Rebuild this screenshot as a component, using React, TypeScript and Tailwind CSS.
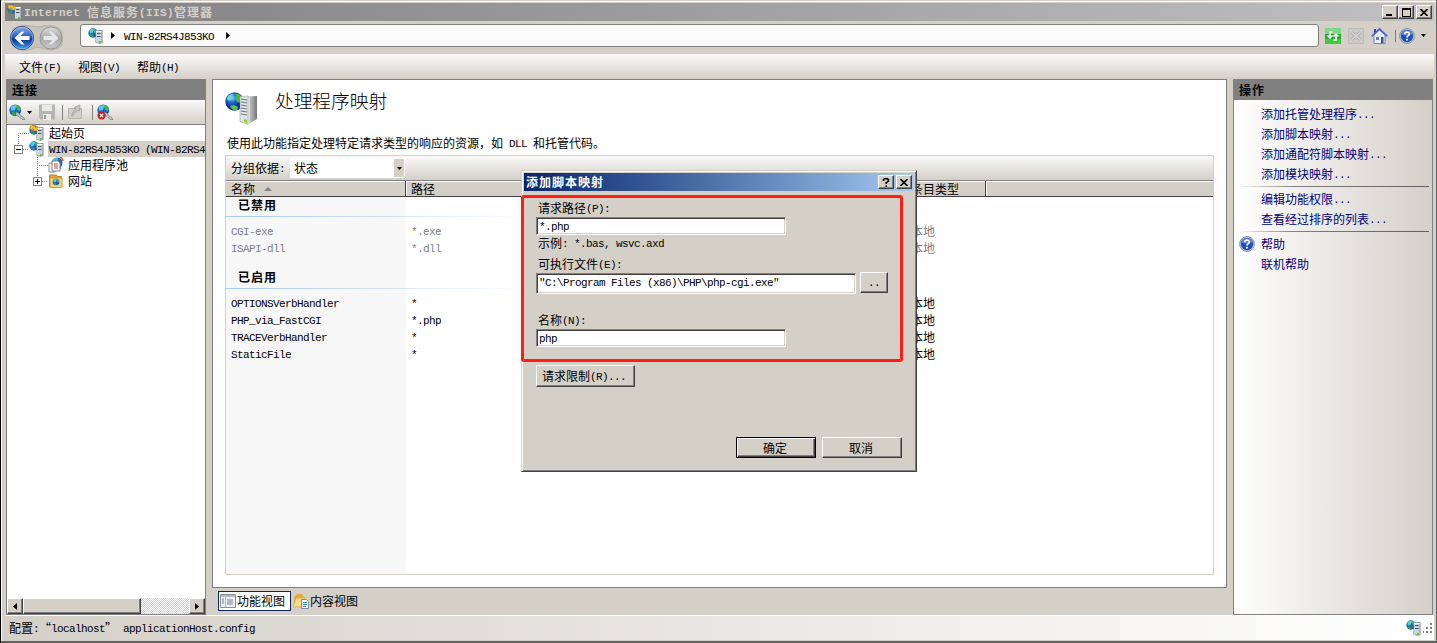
import type { ReactNode } from "react";
import clsx from "clsx";

const raised =
  "bg-[#d4d0c8] border border-t-white border-l-white border-r-[#404040] border-b-[#404040] shadow-[inset_-1px_-1px_0_#808080]";
const sunken =
  "bg-white border border-t-[#808080] border-l-[#808080] border-r-white border-b-white shadow-[inset_1px_1px_0_#404040,inset_-1px_-1px_0_#d4d0c8]";

// Latin runs sit on a half-width grid, Chinese runs on a full-width one
function T({ children, bold }: { children: string; bold?: boolean }) {
  return (
    <span className={clsx("whitespace-pre", bold && "font-bold tracking-[1px]")}>
      {children.split(/([\x20-\x7e]+)/).map((part, i) =>
        i % 2 ? (
          <span
            key={i}
            className={clsx(
              "align-[1px] font-['Liberation_Mono',monospace] text-[11px] leading-none",
              bold ? "tracking-[0.4px]" : "tracking-[-0.6px]"
            )}
          >
            {part}
          </span>
        ) : (
          part
        )
      )}
    </span>
  );
}

function GlobeShape() {
  return (
    <>
      <circle cx="5" cy="5" r="4.7" fill="#1c62c8" />
      <path d="M1.2 2.6C3 .2 6.5.4 7 1.6L5.2 3.2 4.6 5 2 5.4Z" fill="#59c8ec" />
      <path d="M5.4 1.2 8 1.6 9.5 4 8.4 5.5 6.6 4.8 6 3Z" fill="#43b94a" />
      <path d="M2 6l2.6.3L5.6 8 4.6 9.6 2.3 8.4Z" fill="#2fa043" />
      <path d="M7.4 6.6 9 6 8 8.4 6.8 8.6Z" fill="#0b2f8a" />
    </>
  );
}

function ServerIcon({ start = false }: { start?: boolean }) {
  return (
    <svg width="16" height="16" viewBox="0 0 16 16" className="shrink-0">
      <GlobeShape />
      <path d="M7.500 2.500 14 2l.5.8V15l-3 .8-4-1Z" fill="#7f8b93" />
      <path d="M8 3h5.500v11.800L8 14.400Z" fill="#ccd5da" />
      <path d="M8 3h5.500v1H8z" fill="#f2f5f6" />
      <path d="M9 5.500h3.500M9 8.500h3.500" stroke="#46535c" />
      <path d="M11 13h2v2h-2z" fill="#5bcf1d" />
      {start && (
        <path d="M1 1h5v1.500L8 1v5H3.500L5 4.500 3.500 3.500 2.500 5 1 4Z" fill="#f5bd27" stroke="#b87505" strokeWidth=".5" />
      )}
    </svg>
  );
}

function LargeServerIcon() {
  return (
    <svg width="33" height="33" viewBox="0 0 33 33" className="shrink-0">
      <defs>
        <linearGradient id="tower" x1="0" x2="1">
          <stop offset="0" stopColor="#d0d3d5" />
          <stop offset="1" stopColor="#73787c" />
        </linearGradient>
        <radialGradient id="ball" cx=".35" cy=".3">
          <stop offset="0" stopColor="#8ce0ff" />
          <stop offset=".5" stopColor="#2469dc" />
          <stop offset="1" stopColor="#0c2c92" />
        </radialGradient>
      </defs>
      <circle cx="9.5" cy="9.5" r="9.3" fill="url(#ball)" />
      <path d="M11 2c3-1 6 2 7 6l-2 3-4-1-2-4Z" fill="#49b93e" />
      <path d="M5 14l4-1 4 2-1 3c-3 1-6-1-7-4Z" fill="#58c54b" />
      <path d="M2 6c2-3 4-4 6-4L6 7 3 9Z" fill="#6dd8c9" />
      <path d="M23 4.500 32 4V27l-9 5.500Z" fill="url(#tower)" />
      <path d="M15 4.500 23 4V32.500L15 29.500Z" fill="#e2e5e7" stroke="#868b8e" strokeWidth=".5" />
      <path d="M16 7l6 1M16 10l6 1M16 13l6 1M16 16l6 1M16 19l6 1M16 22l6 1" stroke="#6c7479" />
      <path d="M19 27l3 1v3l-3-1Z" fill="#8ddb1c" />
      <path d="M24 5v27" stroke="#f7f7f7" strokeWidth=".8" />
    </svg>
  );
}

function ConnectIcon({ error = false }: { error?: boolean }) {
  return (
    <svg width="17" height="16" viewBox="0 0 17 16" className="shrink-0">
      <g transform="scale(1.25)">
        <GlobeShape />
      </g>
      <path d="M7 8l3 1 1 2 4 3 1 2-3-.6-3-3-3-1Z" fill="#bcc6cb" stroke="#6c7b84" strokeWidth=".7" />
      {error && (
        <>
          <circle cx="4.5" cy="11.5" r="4" fill="#d11c1c" />
          <path d="M3 10l3 3M6 10l-3 3" stroke="#fff" strokeWidth="1.3" />
        </>
      )}
    </svg>
  );
}

function HelpIcon() {
  return (
    <svg width="16" height="16" viewBox="0 0 16 16" className="shrink-0">
      <circle cx="8" cy="8" r="7.400" fill="#c9ced8" stroke="#858d9c" />
      <circle cx="8" cy="8" r="6.2" fill="#2250b6" />
      <path d="M2.2 6.5a6 6 0 0 1 11.6 0Q8 8.600 2.200 6.500Z" fill="#547fd6" />
      <path
        d="M5.700 6.300Q5.900 4.200 8 4.200T10.300 6.200C10.300 7.700 8 7.700 8 9.500M8 10.700v1.700"
        fill="none"
        stroke="#fff"
        strokeWidth="1.700"
      />
    </svg>
  );
}

function NavButtons() {
  return (
    <svg width="56" height="28" viewBox="0 0 56 28" className="mt-[4px] shrink-0">
      <defs>
        <linearGradient id="navBack" x1="0" x2="0" y1="0" y2="1">
          <stop offset="0" stopColor="#8fb4e8" />
          <stop offset=".45" stopColor="#245ec4" />
          <stop offset=".55" stopColor="#0b3596" />
          <stop offset="1" stopColor="#3fa3f2" />
        </linearGradient>
        <linearGradient id="navForward" x1="0" x2="0" y1="0" y2="1">
          <stop offset="0" stopColor="#dcdcdc" />
          <stop offset=".5" stopColor="#a9a9a9" />
          <stop offset="1" stopColor="#c9c9c9" />
        </linearGradient>
      </defs>
      <path d="M4 5Q12 0 22 2 28 4 34 2 46 0 53 7v14Q46 29 33 24 28 22 23 25 11 29 3 21Z" fill="#c6c3bc" stroke="#b4b0a8" />
      <circle cx="13" cy="14" r="11.600" fill="url(#navBack)" stroke="#3d4f78" />
      <circle cx="13" cy="14" r="10.800" fill="none" stroke="#a9c6ee" strokeWidth=".6" />
      <path d="M5.500 14 12.500 7.500H15.500L11.500 12H20.500V16H11.500L15.500 20.500H12.500Z" fill="#fff" />
      <circle cx="42" cy="14" r="11" fill="url(#navForward)" stroke="#969696" />
      <path d="M49.500 14 42.500 7.500H39.500L43.500 12H34.500V16H43.500L39.500 20.500H42.500Z" fill="#e7e7e7" />
    </svg>
  );
}

function Arrow({ dir, className }: { dir: "down" | "right" | "left"; className?: string }) {
  if (dir === "down")
    return (
      <svg width="5" height="3" viewBox="0 0 5 3" className={clsx("shrink-0", className)}>
        <path d="M0 0h5L2.500 3Z" />
      </svg>
    );
  return (
    <svg width="4" height="7" viewBox="0 0 4 7" className={clsx("shrink-0", className)}>
      <path d={dir === "right" ? "M0 0v7L4 3.500Z" : "M4 0v7L0 3.500Z"} />
    </svg>
  );
}

function CloseGlyph() {
  return (
    <svg width="8" height="7" viewBox="0 0 8 7">
      <path d="M.5 0 7.500 7M7.500 0 .5 7" stroke="#000" strokeWidth="1.600" />
    </svg>
  );
}

function TitleBar() {
  return (
    <div className="flex h-[18px] items-center bg-linear-to-r from-[#808080] to-[#c0c0c0] pl-[2px] pr-[2px] text-[#d4d0c8]">
      <ServerIcon start />
      <span className="ml-[1px] flex-1 leading-[18px]">
        <T bold>Internet 信息服务(IIS)管理器</T>
      </span>
      <div className={clsx(raised, "flex h-[14px] w-[16px] items-end pb-[2px] pl-[3px]")}>
        <span className="h-[2px] w-[6px] bg-black" />
      </div>
      <div className={clsx(raised, "flex h-[14px] w-[16px] items-center justify-center")}>
        <span className="h-[9px] w-[9px] border border-t-2 border-black" />
      </div>
      <div className={clsx(raised, "ml-[2px] flex h-[14px] w-[16px] items-center justify-center")}>
        <CloseGlyph />
      </div>
    </div>
  );
}

function AddressBar() {
  return (
    <div className="flex h-[33px] items-center pr-[8px] pb-[4px] pl-[4px]">
      <NavButtons />
      <div className="ml-[15px] flex h-[23px] w-[1239px] items-center rounded-[3px] border border-[#808080] bg-[#fafafa] pl-[7px]">
        <ServerIcon />
        <Arrow dir="right" className="ml-[7px] mr-[9px]" />
        <T>WIN-82RS4J853KO</T>
        <Arrow dir="right" className="ml-[12px]" />
      </div>
      <svg width="16" height="16" viewBox="0 0 16 16" className="ml-[6px]">
        <path d="M0 0h16v16H0z" fill="#22a82c" />
        <path d="M0 0h16v6H0z" fill="#7ed681" />
        <path d="M0 11h16v5H0z" fill="#3fc840" />
        <path d="M7.500 4H5v4M8.500 12H11V8" fill="none" stroke="#fff" strokeWidth="1.600" />
        <path d="M1.500 7.500h7L5 11ZM7.500 8.500h7L11 5Z" fill="#fff" />
      </svg>
      <svg width="16" height="16" viewBox="0 0 16 16" className="ml-[7px]">
        <rect x=".5" y=".5" width="15" height="15" rx="1" fill="#cccbc6" stroke="#bdbbb6" />
        <path d="M4 4.500l8 7M12 4.500l-8 7" stroke="#a5a5a5" strokeWidth="3" />
        <path d="M4 4.500l8 7M12 4.500l-8 7" stroke="#dedede" strokeWidth="1.500" />
      </svg>
      <svg width="17" height="16" viewBox="0 0 17 16" className="ml-[7px]">
        <path d="M3 1h2v5H3z" fill="#3340a5" />
        <path d="M3 7 8.500 2 14 7v8.500H3Z" fill="#e9effa" stroke="#7387b8" />
        <path d="M.7 8.300 8.500.8l7.800 7.500" fill="none" stroke="#4b66c8" strokeWidth="1.600" />
        <path d="M5 9h3v3H5z" fill="#6a7cae" />
        <path d="M10 9h2.500v6H10z" fill="#355087" />
      </svg>
      <span className="ml-[7px] h-[12px] w-[1px] bg-[#808080]" />
      <span className="ml-[3px]">
        <HelpIcon />
      </span>
      <Arrow dir="down" className="ml-[6px]" />
    </div>
  );
}

function MenuBar() {
  return (
    <div className="flex h-[25px] items-center gap-[17px] bg-linear-to-b from-[#fafafa] to-[#d4d0c8] pl-[14px]">
      <T>文件(F)</T>
      <T>视图(V)</T>
      <T>帮助(H)</T>
    </div>
  );
}

function PanelHeader({ children }: { children: string }) {
  return (
    <div className="flex h-[21px] shrink-0 items-center bg-[#808080] pl-[5px] leading-[20px]">
      <T bold>{children}</T>
    </div>
  );
}

type TreeRowProps = { gutter: ReactNode; width: number; icon: ReactNode; children: ReactNode };

function TreeRow({ gutter, width, icon, children }: TreeRowProps) {
  return (
    <div className="flex h-4 items-center">
      <svg width={width} height="16" className="shrink-0" stroke="#808080" fill="none">
        {gutter}
      </svg>
      {icon}
      {children}
    </div>
  );
}

function ConnectionPanel() {
  return (
    <div className="flex h-[536px] w-[200px] flex-col overflow-hidden border border-t-0 border-[#808080] bg-white">
      <PanelHeader>连接</PanelHeader>
      <div className="flex h-[25px] shrink-0 items-center border-b border-[#808080] bg-linear-to-b from-[#fafafa] to-[#d4d0c8] pl-[2px]">
        <ConnectIcon />
        <Arrow dir="down" className="ml-[1px]" />
        <svg width="16" height="16" viewBox="0 0 16 16" className="ml-[7px]">
          <path d="M0 .5h16v15H2L0 14Z" fill="#b4b4b4" />
          <path d="M3 1h10v6H3zM4 10h8v6H4z" fill="#e9e9e6" />
          <path d="M5 11h2v4H5z" fill="#999" />
        </svg>
        <span className="ml-[7px] h-[15px] w-[1px] bg-[#808080]" />
        <svg width="15" height="16" viewBox="0 0 15 16" className="ml-[5px]">
          <path d="M.5 4.500h13v10H.5z" fill="#d2d0cb" stroke="#b7b5b0" />
          <path d="M3.500 12Q4 7 8 5L6 3.500 12 1 11.500 7 10 6Q6 8 5 12Z" fill="#c4c3bf" stroke="#aaa" />
        </svg>
        <span className="ml-[9px] mr-[4px] h-[15px] w-[1px] bg-[#808080]" />
        <ConnectIcon error />
      </div>
      <div className="flex-1">
        <TreeRow
          width={22}
          gutter={<path d="M11.500 8v8M11 8.500h11" strokeDasharray="1 1" />}
          icon={<ServerIcon start />}
        >
          <span className="ml-[4px]">起始页</span>
        </TreeRow>
        <TreeRow
          width={22}
          gutter={
            <>
              <path d="M11.500 0v4M16 8.500h6" strokeDasharray="1 1" />
              <path d="M7.500 4.500h8v8h-8z" />
              <path d="M9 8.500h5" stroke="#000" />
            </>
          }
          icon={<ServerIcon />}
        >
          <span className="ml-[3px] flex h-4 flex-1 items-center bg-[#d4d0c8] pl-[1px]">
            <T>WIN-82RS4J853KO (WIN-82RS4</T>
          </span>
        </TreeRow>
        <TreeRow
          width={41}
          gutter={<path d="M30.500 0v16M30 8.500h11" strokeDasharray="1 1" />}
          icon={
            <svg width="16" height="16" viewBox="0 0 16 16" className="shrink-0">
              <circle cx="9" cy="5.500" r="5.200" fill="#57b6cf" />
              <path d="M10 1q4 0 4.500 5l-2 6-2-2Z" fill="#2563b3" />
              <path d="M12 0q3 1 3 4" fill="none" stroke="#e45728" strokeWidth="1.500" />
              <path d="M1 6h6v9H1z" fill="#f5f7f9" stroke="#8993a0" />
              <path d="M4 4h6l2 2v8H4z" fill="#fff" stroke="#71809a" />
              <path d="M6 7h4M6 9h4M6 11h4" stroke="#c9442d" />
            </svg>
          }
        >
          <span className="ml-[4px]">应用程序池</span>
        </TreeRow>
        <TreeRow
          width={41}
          gutter={
            <>
              <path d="M30.500 0v4M35 8.500h6" strokeDasharray="1 1" />
              <path d="M26.500 4.500h8v8h-8z" />
              <path d="M28 8.500h5M30.500 6v5" stroke="#000" />
            </>
          }
          icon={
            <svg width="16" height="16" viewBox="0 0 16 16" className="shrink-0">
              <path d="M1.500 2h7l1 1.500h4V14h-12z" fill="#e0a52c" stroke="#bd8325" />
              <path d="M2 5h12v9.500H2z" fill="#f7d677" stroke="#c59843" />
              <g transform="translate(4.500 5.500) scale(.7)">
                <GlobeShape />
              </g>
            </svg>
          }
        >
          <span className="ml-[4px]">网站</span>
        </TreeRow>
      </div>
      <div className="flex h-[16px] bg-[repeating-conic-gradient(#fff_0_25%,#d4d0c8_0_50%)] bg-size-[2px_2px]">
        <div className={clsx(raised, "flex w-[16px] items-center justify-center")}>
          <Arrow dir="left" />
        </div>
        <div className={clsx(raised, "w-[118px]")} />
        <div className={clsx(raised, "ml-auto flex w-[16px] items-center justify-center")}>
          <Arrow dir="right" />
        </div>
      </div>
    </div>
  );
}

type Handler = { name: string; path: string };

const disabledHandlers: Handler[] = [
  { name: "CGI-exe", path: "*.exe" },
  { name: "ISAPI-dll", path: "*.dll" },
];

const enabledHandlers: Handler[] = [
  { name: "OPTIONSVerbHandler", path: "*" },
  { name: "PHP_via_FastCGI", path: "*.php" },
  { name: "TRACEVerbHandler", path: "*" },
  { name: "StaticFile", path: "*" },
];

function HandlerGroup({ title, rows, muted }: { title: string; rows: Handler[]; muted?: boolean }) {
  return (
    <div className="pb-[12px]">
      <div className="h-[19px] pl-[12px] leading-[16px]">
        <T bold>{title}</T>
      </div>
      <div className="mb-[5px] h-[1px] w-[310px] bg-linear-to-r from-[#a6caf0] to-transparent" />
      {rows.map((row) => (
        <div key={row.name} className={clsx("flex h-[17px] items-center pl-[5px]", muted && "text-[#808080]")}>
          <span className="w-[180px]">
            <T>{row.name}</T>
          </span>
          <span className="w-[500px]">
            <T>{row.path}</T>
          </span>
          <span>本地</span>
        </div>
      ))}
    </div>
  );
}

function HandlerPanel() {
  return (
    <div className="h-[509px] w-[1015px] border border-[#808080] bg-white pl-[12px] pr-[12px]">
      <div className="flex h-[54px] pt-[12px]">
        <LargeServerIcon />
        <h1 className="ml-[17px] h-[20px] text-[18.700px] leading-[15px] font-light">处理程序映射</h1>
      </div>
      <p className="h-[21px] pl-[2px] leading-[18px]">
        <T>使用此功能指定处理特定请求类型的响应的资源，如 DLL 和托管代码。</T>
      </p>
      <div className="flex h-[420px] flex-col border border-[#d4d0c8]">
        <div className="flex h-[24px] items-center bg-linear-to-b from-[#fafafa] to-[#d4d0c8] pl-[5px]">
          <span className="w-[59px]">
            <T>分组依据:</T>
          </span>
          <div className="flex h-[20px] w-[115px] items-center border border-white bg-white pl-[3px]">
            <span className="flex-1">状态</span>
            <span className="flex h-full w-[10px] items-center justify-center bg-[#d4d0c8]">
              <Arrow dir="down" />
            </span>
          </div>
        </div>
        <div className="flex h-[17px] border-t border-b border-t-[#808080] border-b-[#404040] bg-[#d4d0c8] leading-[15px] shadow-[inset_0_1px_0_#fff]">
          <div className="flex w-[180px] items-center border-r border-[#404040] pl-[5px]">
            名称
            <svg width="8" height="4" className="ml-[9px]">
              <path d="M0 4h8L4 0Z" fill="#808080" />
            </svg>
          </div>
          <div className="w-[500px] border-l border-white pl-[4px]">路径</div>
          <div className="w-[80px] border-r border-[#404040] pl-[5px]">条目类型</div>
          <div className="flex-1 border-l border-white" />
        </div>
        <div className="flex-1 bg-linear-to-r from-[#f7f7f7] from-[180px] to-white to-[180px]">
          <HandlerGroup title="已禁用" rows={disabledHandlers} muted />
          <div className="h-[1px]" />
          <HandlerGroup title="已启用" rows={enabledHandlers} />
        </div>
      </div>
    </div>
  );
}

function ViewTabs() {
  return (
    <div className="mt-[3px] ml-[6px] flex h-[20px] items-center">
      <div className="flex h-[20px] w-[73px] items-center border border-[#0a246a] bg-white pl-[1px]">
        <svg width="16" height="14" viewBox="0 0 16 14" className="mr-[1px]">
          <path d="M.5.5h15v13H.5z" fill="#eef0f3" stroke="#868e9c" />
          <path d="M1 1h14v2H1z" fill="#b3bbc6" />
          <path d="M2 5h2M2 7h2M2 9h2M7 6h6M7 8h6M7 10h6" stroke="#74808f" />
          <path d="M5.500 3v10" stroke="#bbb" />
        </svg>
        功能视图
      </div>
      <svg width="17" height="16" viewBox="0 0 17 16" className="ml-[2px]">
        <path d="M1 4l3-3h5l2 3v8L1 14Z" fill="#e4ad38" />
        <path d="M3 5h9l-3 9H0Z" fill="#f8dc88" stroke="#cfa34d" strokeWidth=".6" />
        <path d="M8.500 6.500h5l2 2v7h-7z" fill="#fff" stroke="#7b8da8" />
        <path d="M10 9.500h4M10 11.500h4M10 13.500h3" stroke="#2a78d0" />
      </svg>
      内容视图
    </div>
  );
}

function ActionPanel() {
  const divider = "ml-[3px] mr-[3px] h-[1px] bg-linear-to-r from-transparent via-[#808080] via-30% to-[#606060]";
  return (
    <div className="h-[536px] w-[200px] border border-t-0 border-[#808080] bg-linear-to-r from-white to-[#d4d0c8] leading-[20px] text-[#000080]">
      <div className="text-black">
        <PanelHeader>操作</PanelHeader>
      </div>
      <ul className="pt-[4px] pb-[2px] pl-[27px]">
        {["添加托管处理程序...", "添加脚本映射...", "添加通配符脚本映射...", "添加模块映射..."].map((item) => (
          <li key={item} className="h-[20px]">
            <T>{item}</T>
          </li>
        ))}
      </ul>
      <div className={divider} />
      <ul className="pt-[2px] pb-[2px] pl-[27px]">
        {["编辑功能权限...", "查看经过排序的列表..."].map((item) => (
          <li key={item} className="h-[20px]">
            <T>{item}</T>
          </li>
        ))}
      </ul>
      <div className={divider} />
      <div className="flex h-[22px] items-center gap-[6px] pt-[2px] pl-[5px]">
        <HelpIcon />
        帮助
      </div>
      <div className="pl-[27px]">联机帮助</div>
    </div>
  );
}

function StatusBar() {
  return (
    <div className="flex h-[25px] items-center border-t border-white bg-linear-to-r from-[#d4d0c8] to-white pl-[4px] pr-[2px]">
      <span className="flex-1">
        <T>配置:“localhost” applicationHost.config</T>
      </span>
      <ServerIcon />
      <svg width="9" height="12" className="ml-[1px]" fill="#808080">
        <path d="M7 1h2v2H7zM3 5h2v2H3zM7 5h2v2H7zM0 9h1v2H0zM3 9h2v2H3zM7 9h2v2H7z" />
      </svg>
    </div>
  );
}

function MappingDialog() {
  return (
    <div className="absolute top-[170px] left-[520px] flex h-[302px] w-[396px] flex-col border border-t-[#d4d0c8] border-r-[#404040] border-b-[#404040] border-l-[#d4d0c8] bg-[#d4d0c8] p-[2px] shadow-[inset_1px_1px_0_#fff,inset_-1px_-1px_0_#808080]">
      <div className="flex h-[18px] items-center bg-linear-to-r from-[#0a246a] to-[#a6caf0] pl-[2px] pr-[2px] text-white">
        <span className="flex-1 leading-[18px]">
          <T bold>添加脚本映射</T>
        </span>
        <div className={clsx(raised, "flex h-[14px] w-[16px] items-center justify-center")}>
          <svg width="8" height="9" viewBox="0 0 8 9">
            <path
              d="M1.500 3V1.500L2.500.8h3l1 .8v1.600L4.200 4.600V6M4.200 7.300V9"
              fill="none"
              stroke="#000"
              strokeWidth="1.600"
            />
          </svg>
        </div>
        <div className={clsx(raised, "ml-[2px] flex h-[14px] w-[16px] items-center justify-center")}>
          <CloseGlyph />
        </div>
      </div>
      <div className="flex flex-1 flex-col pt-[8px] pr-[12px] pl-[12px]">
        <label className="h-[18px] pl-[2px] leading-[18px]">
          <T>请求路径(P):</T>
        </label>
        <div className={clsx(sunken, "h-[18px] w-[250px] pl-[2px] leading-[16px]")}>
          <T>*.php</T>
        </div>
        <div className="h-[20px] pl-[2px] leading-[16px]">
          <T>示例: *.bas, wsvc.axd</T>
        </div>
        <label className="h-[17px] pl-[2px] leading-[18px]">
          <T>可执行文件(E):</T>
        </label>
        <div className="flex h-[22px] gap-[4px]">
          <div className={clsx(sunken, "mt-[1px] h-[21px] w-[320px] pl-[2px] leading-[16px]")}>
            <T>"C:\Program Files (x86)\PHP\php-cgi.exe"</T>
          </div>
          <div className={clsx(raised, "h-[21px] w-[28px] text-center leading-[18px]")}>
            <T>..</T>
          </div>
        </div>
        <label className="mt-[17px] h-[18px] pl-[2px] leading-[18px]">
          <T>名称(N):</T>
        </label>
        <div className={clsx(sunken, "h-[18px] w-[250px] pl-[2px] leading-[16px]")}>
          <T>php</T>
        </div>
        <div className={clsx(raised, "mt-[18px] h-[22px] w-[99px] pl-[5px] leading-[20px]")}>
          <T>请求限制(R)...</T>
        </div>
        <div className="mt-[50px] flex justify-end gap-[6px] text-center leading-[19px]">
          <div className="h-[21px] w-[80px] border border-black pr-[2px] leading-[19px] shadow-[inset_1px_1px_0_#fff,inset_-1px_-1px_0_#404040,inset_-2px_-2px_0_#808080]">
            确定
          </div>
          <div className={clsx(raised, "h-[21px] w-[80px] pr-[2px]")}>取消</div>
        </div>
      </div>
    </div>
  );
}

export default function App() {
  return (
    <div
      lang="zh-CN"
      className="relative h-[643px] w-[1437px] overflow-hidden border-l border-black bg-[#d4d0c8] font-['Noto_Sans_CJK_SC',sans-serif] text-[12px] leading-4 text-black"
    >
      <div className="h-[643px] border-r border-b-2 border-[#606060] pt-[1px]">
        <div className="h-[640px] border-t border-l border-white pt-[1px] pr-[2px] pl-[3px]">
          <TitleBar />
          <AddressBar />
          <MenuBar />
          <div className="flex h-[536px] gap-[6px] pl-[1px]">
            <ConnectionPanel />
            <div className="w-[1015px]">
              <HandlerPanel />
              <ViewTabs />
            </div>
            <ActionPanel />
          </div>
          <StatusBar />
        </div>
      </div>
      <MappingDialog />
      <div className="absolute top-[195px] left-[520px] h-[167px] w-[382px] rounded-[3px] border-3 border-[#ff1e10]" />
    </div>
  );
}
